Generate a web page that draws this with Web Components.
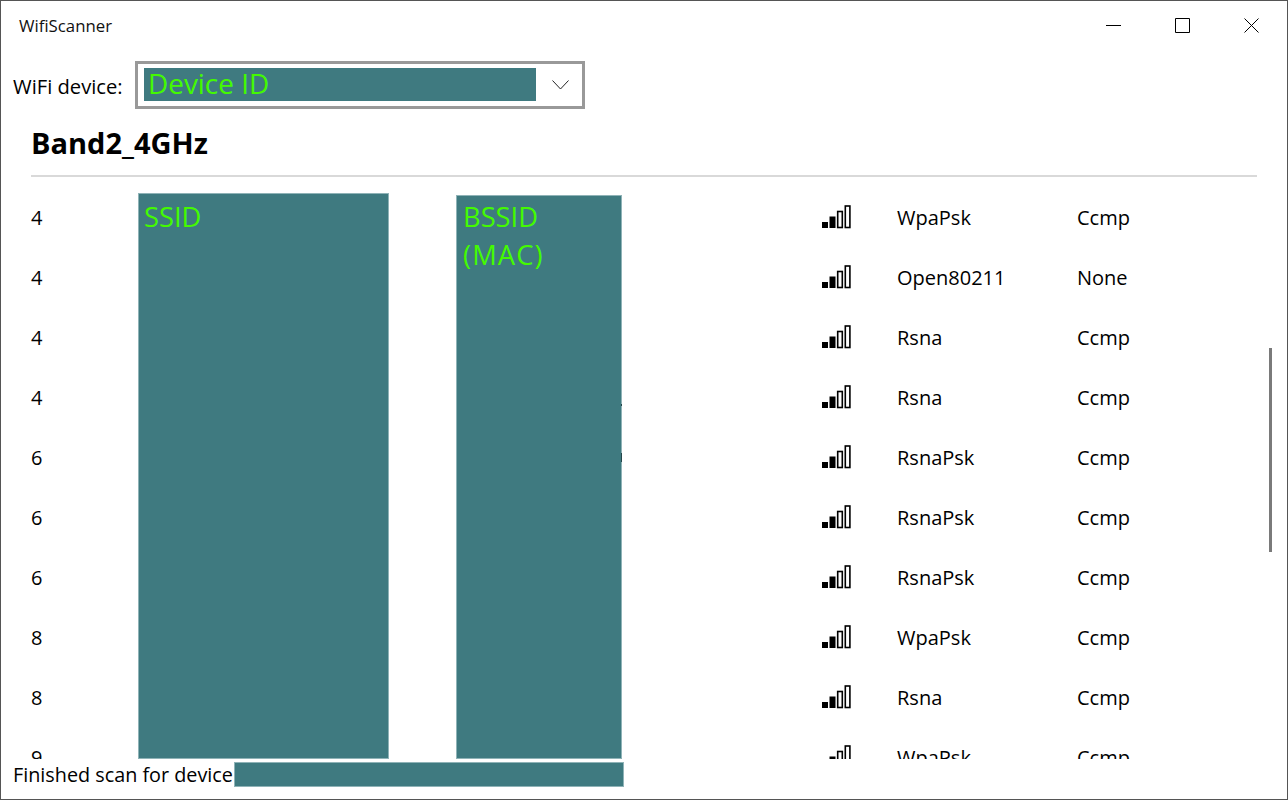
<!DOCTYPE html>
<html>
<head>
<meta charset="utf-8">
<title>WifiScanner</title>
<style>
  html, body { margin: 0; padding: 0; background: #fff; }
  body { font-family: "Open Sans", "Noto Sans", sans-serif; color: #000; }
</style>
</head>
<body>
<wifi-window>
  <title-bar slot="title">WifiScanner</title-bar>
  <device-picker slot="picker">Device ID</device-picker>
  <band-header slot="band">Band2_4GHz</band-header>
  <network-list slot="list" id="list"></network-list>
  <status-line slot="status">Finished scan for device</status-line>
</wifi-window>

<script>
class WifiWindow extends HTMLElement {
  constructor() {
    super();
    this.attachShadow({ mode: "open" });
    this.shadowRoot.innerHTML = `
      <style>
        :host {
          display: flex;
          flex-direction: column;
          box-sizing: border-box;
          width: 1288px;
          height: 800px;
          border: 1px solid #555;
          background: #fff;
          overflow: hidden;
        }
      </style>
      <slot name="title"></slot>
      <slot name="picker"></slot>
      <slot name="band"></slot>
      <slot name="list"></slot>
      <slot name="status"></slot>
    `;
  }
}

class TitleBar extends HTMLElement {
  constructor() {
    super();
    this.attachShadow({ mode: "open" });
    this.shadowRoot.innerHTML = `
      <style>
        :host {
          display: flex;
          align-items: flex-start;
          justify-content: space-between;
          height: 50px;
          color: #111;
          font-size: 16.8px;
        }
        .name { padding-left: 18px; line-height: 49px; }
        .buttons { display: flex; margin-right: 1px; }
        .btn { width: 69px; height: 49px; display: flex; align-items: center; justify-content: center; }
        svg { display: block; }
      </style>
      <span class="name"><slot></slot></span>
      <div class="buttons">
        <div class="btn"><svg width="15" height="15" viewBox="0 0 15 15"><path d="M0 7.5H15" stroke="#000" fill="none"/></svg></div>
        <div class="btn"><svg width="15" height="15" viewBox="0 0 15 15"><path d="M.5.5H14.5V14.5H.5Z" stroke="#000" fill="none"/></svg></div>
        <div class="btn"><svg width="15" height="15" viewBox="0 0 15 15"><path d="M.5.5L14.5 14.5M14.5.5L.5 14.5" stroke="#000" fill="none"/></svg></div>
      </div>
    `;
  }
}

class DevicePicker extends HTMLElement {
  constructor() {
    super();
    this.attachShadow({ mode: "open" });
    this.shadowRoot.innerHTML = `
      <style>
        :host {
          display: flex;
          align-items: center;
          height: 48px;
          margin-top: 10px;
          padding-left: 12px;
          font-size: 20.2px;
          color: #000;
        }
        .label { width: 122px; flex: none; padding-top: 1px; }
        .combo {
          box-sizing: border-box;
          width: 450px;
          height: 48px;
          border: 3px solid #999;
          display: flex;
          align-items: center;
          padding: 0 0 1px 6px;
        }
        .value {
          width: 392px;
          height: 33px;
          background: #3f7a80;
          color: #44fa00;
          font-size: 27.9px;
          line-height: 31px;
          padding-left: 4px;
          box-sizing: border-box;
          white-space: nowrap;
        }
        svg { margin-left: 16px; display: block; }
      </style>
      <span class="label">WiFi device:</span>
      <div class="combo">
        <div class="value"><slot></slot></div>
        <svg width="17" height="10" viewBox="0 0 17 10"><path d="M.5.5L8.5 9L16.5.5" stroke="#222" fill="none"/></svg>
      </div>
    `;
  }
}

class BandHeader extends HTMLElement {
  constructor() {
    super();
    this.attachShadow({ mode: "open" });
    this.shadowRoot.innerHTML = `
      <style>
        :host { display: block; margin: 0 30px; }
        .text {
          font-weight: 700;
          font-size: 29px;
          line-height: 40px;
          height: 52px;
          padding-top: 14px;
        }
        .rule { height: 2px; background: #d9d9d9; }
      </style>
      <div class="text"><slot></slot></div>
      <div class="rule"></div>
    `;
  }
}

class SignalIcon extends HTMLElement {
  constructor() {
    super();
    this.attachShadow({ mode: "open" });
    this.shadowRoot.innerHTML = `
      <style>:host { display: block; width: 30px; height: 24px; } svg { display: block; }</style>
      <svg width="30" height="24" viewBox="0 0 30 24">
        <rect x="0" y="17" width="6" height="6" fill="#000"/>
        <rect x="7.5" y="11.5" width="6" height="11.5" fill="#000"/>
        <rect x="15.7" y="6.5" width="4.6" height="16" fill="#fff" stroke="#000" stroke-width="1.6"/>
        <rect x="23.3" y="1" width="4.6" height="21.5" fill="#fff" stroke="#000" stroke-width="1.6"/>
      </svg>
    `;
  }
}

class NetworkRow extends HTMLElement {
  constructor() {
    super();
    this.attachShadow({ mode: "open" });
  }
  connectedCallback() {
    this.shadowRoot.innerHTML = `
      <style>
        :host {
          display: grid;
          grid-template-columns: 791px 75px 180px 1fr;
          align-items: center;
          height: 60px;
          font-size: 20px;
          color: #000;
        }
      </style>
      <span>${this.getAttribute("channel")}</span>
      <signal-icon></signal-icon>
      <span>${this.getAttribute("auth")}</span>
      <span>${this.getAttribute("cipher")}</span>
    `;
  }
}

// Bloque que tapa los datos privados en la captura
class RedactBlock extends HTMLElement {
  constructor() {
    super();
    this.attachShadow({ mode: "open" });
    this.shadowRoot.innerHTML = `
      <style>
        :host {
          position: absolute;
          box-sizing: border-box;
          background: #3f7a80;
          border: 1px solid #8fb3b7;
          color: #44fa00;
          font-size: 27.3px;
          line-height: 38px;
          padding: 4px 5px;
        }
      </style>
      <slot></slot>
    `;
  }
}

class NetworkList extends HTMLElement {
  constructor() {
    super();
    this.attachShadow({ mode: "open" });
    const rows = [
      ["4", "WpaPsk", "Ccmp"],
      ["4", "Open80211", "None"],
      ["4", "Rsna", "Ccmp"],
      ["4", "Rsna", "Ccmp"],
      ["6", "RsnaPsk", "Ccmp"],
      ["6", "RsnaPsk", "Ccmp"],
      ["6", "RsnaPsk", "Ccmp"],
      ["8", "WpaPsk", "Ccmp"],
      ["8", "Rsna", "Ccmp"],
      ["9", "WpaPsk", "Ccmp"],
    ];
    const html = rows
      .map((r) => `<network-row channel="${r[0]}" auth="${r[1]}" cipher="${r[2]}"></network-row>`)
      .join("\n");
    this.shadowRoot.innerHTML = `
      <style>
        :host {
          display: block;
          position: relative;
          height: 582px;
          overflow: hidden;
        }
        .rows { padding: 10px 0 0 30px; }
        redact-block.ssid { left: 137px; top: 16px; width: 251px; height: 566px; }
        redact-block.bssid { left: 455px; top: 18px; width: 166px; height: 564px; padding-top: 2px; padding-left: 6px; }
        .mac { letter-spacing: 1.1px; }
        .speck { position: absolute; background: #24474b; width: 1px; }
        .thumb { position: absolute; left: 1268px; top: 171px; width: 3px; height: 204px; background: #7a7a7a; }
      </style>
      <div class="rows">${html}</div>
      <redact-block class="ssid">SSID</redact-block>
      <redact-block class="bssid">BSSID<br><span class="mac">(MAC)</span></redact-block>
      <div class="speck" style="left:620px;top:227px;height:2px"></div>
      <div class="speck" style="left:620px;top:276px;height:9px"></div>
      <div class="thumb"></div>
    `;
  }
}

class StatusLine extends HTMLElement {
  constructor() {
    super();
    this.attachShadow({ mode: "open" });
    this.shadowRoot.innerHTML = `
      <style>
        :host {
          display: flex;
          align-items: center;
          height: 25px;
          margin-top: 3px;
          padding-left: 12px;
          font-size: 19.8px;
          color: #000;
          white-space: nowrap;
        }
        .text { width: 221px; flex: none; }
        .mask {
          box-sizing: border-box;
          width: 390px;
          height: 25px;
          background: #3f7a80;
          border: 1px solid #8fb3b7;
        }
      </style>
      <span class="text"><slot></slot></span>
      <div class="mask"></div>
    `;
  }
}

customElements.define("wifi-window", WifiWindow);
customElements.define("title-bar", TitleBar);
customElements.define("device-picker", DevicePicker);
customElements.define("band-header", BandHeader);
customElements.define("signal-icon", SignalIcon);
customElements.define("network-row", NetworkRow);
customElements.define("redact-block", RedactBlock);
customElements.define("network-list", NetworkList);
customElements.define("status-line", StatusLine);
</script>
</body>
</html>
